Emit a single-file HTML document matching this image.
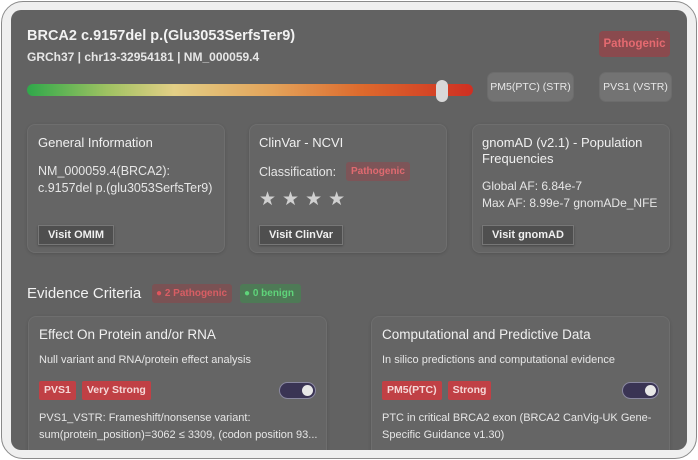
<!DOCTYPE html>
<html><head><style>
*{box-sizing:border-box;margin:0;padding:0}
body{width:698px;height:460px;background:#fff;font-family:"Liberation Sans",sans-serif;position:relative;overflow:hidden}
.frame{position:absolute;left:1px;top:1px;width:696px;height:458px;border:1px solid #8a8a8a;border-radius:22px;background:#efefef}
.panel{position:absolute;left:11px;top:10px;width:676px;height:440px;background:#626262;border-radius:10px;overflow:hidden}
.abs{position:absolute}
.t1{left:16px;top:18px;color:#f2f2f2;font-weight:bold;font-size:14.5px}
.t2{left:16px;top:40px;color:#e6e6e6;font-weight:bold;font-size:12px}
.bar{left:16px;top:74px;width:446px;height:12px;border-radius:6px;background:linear-gradient(90deg,#2fa84a 0%,#9fc262 18%,#e3cf86 33%,#e3a35a 55%,#dd6a2d 75%,#cf2f22 100%)}
.knob{left:425px;top:70px;width:12px;height:22px;border-radius:6px;background:#d8d8d8}
.pill{background:#737373;border-radius:7px;color:#e8e8e8;font-size:10.5px;text-align:center;line-height:28px;height:30px;border:1px solid #6c6c6c}
.patho{left:588px;top:21px;width:71px;height:26px;background:#8a4a4e;border-radius:4px;color:#e56a70;font-weight:bold;font-size:11.5px;text-align:center;line-height:26px}
.card{position:absolute;background:#656565;border:1px solid #6e6e6e;border-radius:8px;box-shadow:0 1px 3px rgba(0,0,0,.15)}
.ch{color:#f0f0f0;font-size:13px}
.tx{color:#e6e6e6;font-size:12px;line-height:17px}
.btn{position:absolute;background:#4f4f4f;border:1px solid #777;color:#f0f0f0;font-weight:bold;font-size:11px;height:20px;line-height:18px;padding:0 9px;box-shadow:0 1px 2px rgba(0,0,0,.3)}
.tag{display:inline-block;background:#c04045;color:#f5d8d8;font-weight:bold;font-size:10.5px;height:19px;line-height:19px;padding:0 5px;border-radius:2px;margin-right:6px}
.tog{position:absolute;width:37px;height:17px;border-radius:9px;background:#3a3454;border:1px solid #8a88a0}
.tog:after{content:"";position:absolute;right:2px;top:2px;width:11px;height:11px;border-radius:50%;background:#e8e8e8}
.star{color:#d0d0d0;font-size:19px;letter-spacing:6px}
</style></head><body>
<div class="frame"></div>
<div class="panel">
<div class="abs t1">BRCA2 c.9157del p.(Glu3053SerfsTer9)</div>
<div class="abs t2">GRCh37 | chr13-32954181 | NM_000059.4</div>
<div class="abs patho">Pathogenic</div>
<div class="abs bar"></div>
<div class="abs knob"></div>
<div class="abs pill" style="left:476px;top:62px;width:87px">PM5(PTC) (STR)</div>
<div class="abs pill" style="left:588px;top:62px;width:73px">PVS1 (VSTR)</div>

<div class="card" style="left:16px;top:114px;width:198px;height:129px">
 <div class="abs ch" style="left:10px;top:10px">General Information</div>
 <div class="abs tx" style="left:10px;top:38px;font-size:12.5px">NM_000059.4(BRCA2):<br>c.9157del p.(glu3053SerfsTer9)</div>
 <div class="btn" style="left:10px;top:100px">Visit OMIM</div>
</div>
<div class="card" style="left:238px;top:114px;width:198px;height:129px">
 <div class="abs ch" style="left:9px;top:10px">ClinVar - NCVI</div>
 <div class="abs tx" style="left:9px;top:39px;font-size:12.5px">Classification:</div>
 <div class="abs" style="left:96px;top:37px;background:#7d5558;color:#e06a70;font-weight:bold;font-size:10px;padding:0 5px;height:19px;line-height:19px;border-radius:3px">Pathogenic</div>
 <div class="abs star" style="left:9px;top:63px">★★★★</div>
 <div class="btn" style="left:9px;top:100px">Visit ClinVar</div>
</div>
<div class="card" style="left:461px;top:114px;width:198px;height:129px">
 <div class="abs ch" style="left:9px;top:10px;line-height:16px">gnomAD (v2.1) - Population<br>Frequencies</div>
 <div class="abs tx" style="left:9px;top:53px">Global AF: 6.84e-7<br>Max AF: 8.99e-7 gnomADe_NFE</div>
 <div class="btn" style="left:9px;top:100px">Visit gnomAD</div>
</div>

<div class="abs" style="left:16px;top:275px;color:#f2f2f2;font-size:15px">Evidence Criteria</div>
<div class="abs" style="left:141px;top:274px;width:80px;height:19px;background:#7a5254;color:#d85e64;font-weight:bold;font-size:10px;line-height:19px;border-radius:3px;padding-left:4px"><span style="color:#e0555c">●</span> 2 Pathogenic</div>
<div class="abs" style="left:229px;top:274px;width:61px;height:19px;background:#4e7a56;color:#5fd47a;font-weight:bold;font-size:10px;line-height:19px;border-radius:3px;padding-left:4px">● 0 benign</div>

<div class="card" style="left:17px;top:306px;width:299px;height:150px">
 <div class="abs ch" style="left:10px;top:10px;font-size:13.5px">Effect On Protein and/or RNA</div>
 <div class="abs tx" style="left:10px;top:35px;font-size:11px">Null variant and RNA/protein effect analysis</div>
 <div class="abs" style="left:10px;top:63px"><span class="tag">PVS1</span><span class="tag">Very Strong</span></div>
 <div class="tog" style="left:250px;top:65px"></div>
 <div class="abs tx" style="left:10px;top:93px;font-size:11px;line-height:17px">PVS1_VSTR: Frameshift/nonsense variant:<br>sum(protein_position)=3062 ≤ 3309, (codon position 93...</div>
</div>
<div class="card" style="left:360px;top:306px;width:299px;height:150px">
 <div class="abs ch" style="left:10px;top:10px;font-size:13.5px">Computational and Predictive Data</div>
 <div class="abs tx" style="left:10px;top:35px;font-size:11px">In silico predictions and computational evidence</div>
 <div class="abs" style="left:10px;top:63px"><span class="tag">PM5(PTC)</span><span class="tag">Strong</span></div>
 <div class="tog" style="left:250px;top:65px"></div>
 <div class="abs tx" style="left:10px;top:93px;font-size:11px;line-height:17px">PTC in critical BRCA2 exon (BRCA2 CanVig-UK Gene-<br>Specific Guidance v1.30)</div>
</div>
</div>
</body></html>
